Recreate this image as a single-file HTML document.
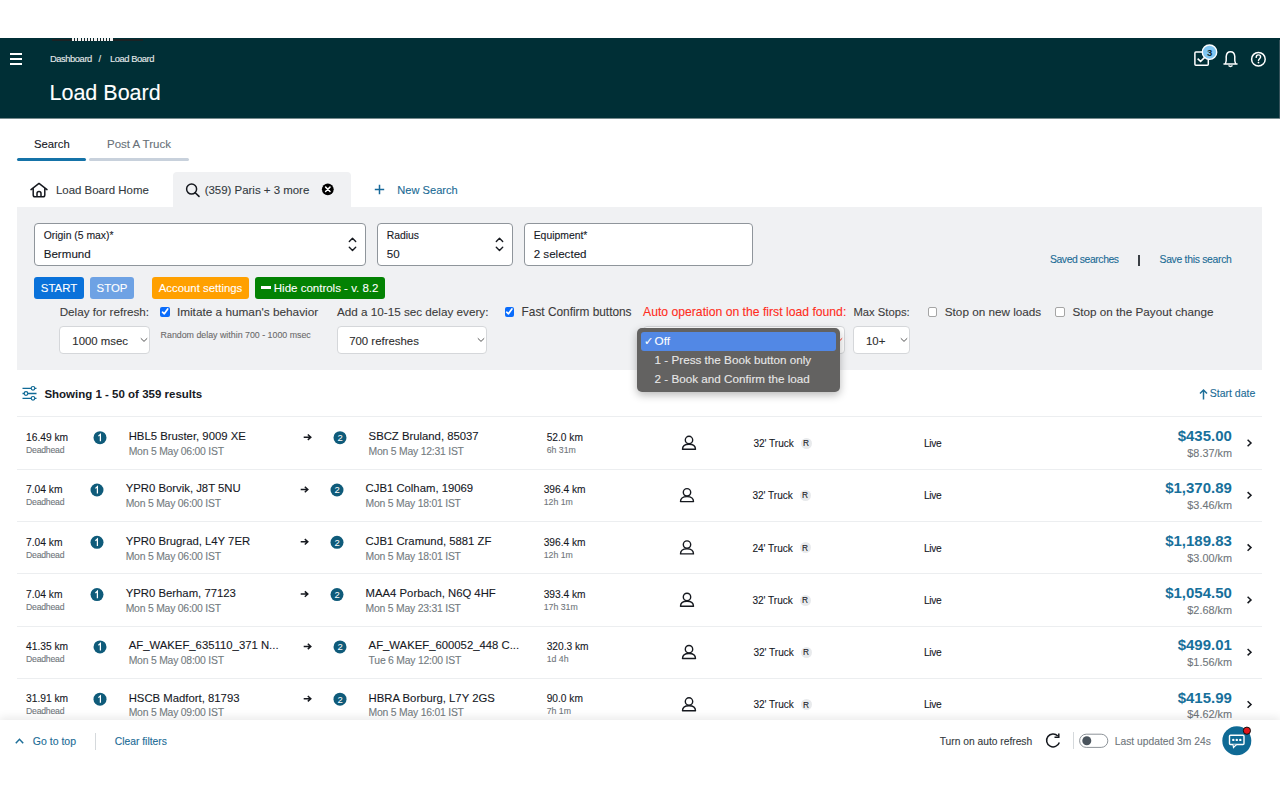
<!DOCTYPE html>
<html><head><meta charset="utf-8">
<style>
*{box-sizing:border-box;margin:0;padding:0}
html,body{width:1280px;height:800px;overflow:hidden;background:#fff;font-family:"Liberation Sans",sans-serif;color:#16191f}
.t{position:absolute;white-space:nowrap;line-height:1;-webkit-text-stroke:0.1px currentColor}
.b{position:absolute}
svg{position:absolute;overflow:visible}
</style></head><body>
<div class="b" style="left:0;top:38px;width:1280px;height:80px;background:#002f36"></div>
<div class="b" style="left:1279px;top:40px;width:1px;height:78px;background:#35525a"></div><div class="b" style="left:0;top:118px;width:1280px;height:1px;background:#768a8d"></div>
<div class="b" style="left:52px;top:39px;width:91px;height:1.5px;background:#1c2224"></div>
<div class="b" style="left:72px;top:38px;width:41px;height:2.5px;background:repeating-linear-gradient(90deg,#f2f2f2 0 2.2px,rgba(0,0,0,0) 2.2px 3.2px)"></div>
<div class="b" style="left:10px;top:53px;width:12px;height:2px;background:#fff"></div>
<div class="b" style="left:10px;top:58px;width:12px;height:2px;background:#fff"></div>
<div class="b" style="left:10px;top:63px;width:12px;height:2px;background:#fff"></div>
<div class="t" style="left:50.0px;top:54.0px;font-size:9.4px;color:#e6eaeb;letter-spacing:-0.45px;">Dashboard</div>
<div class="t" style="left:98.5px;top:54.0px;font-size:9.4px;color:#e6eaeb;">/</div>
<div class="t" style="left:110.0px;top:54.0px;font-size:9.4px;color:#e6eaeb;letter-spacing:-0.45px;">Load Board</div>
<div class="t" style="left:49.5px;top:83.0px;font-size:21.5px;color:#ffffff;">Load Board</div>
<svg style="left:0;top:0" width="1280" height="120">
 <rect x="1194.9" y="52.1" width="13.4" height="13.2" rx="1" fill="none" stroke="#fff" stroke-width="1.5"/>
 <path d="M1197.6 58.6 L1200.6 61.4 L1206.5 55.6" fill="none" stroke="#fff" stroke-width="1.5"/>
 <circle cx="1209.5" cy="52.2" r="7.2" fill="#80c6f1" stroke="#fff" stroke-width="1.4"/>
 <text x="1209.6" y="55.6" font-family="Liberation Sans" font-size="9.5" font-weight="bold" fill="#0d2a33" text-anchor="middle">3</text>
 <path d="M1224 64 L1237 64 M1225.4 63.6 C1227 61 1226 58 1226.2 56.5 C1226.5 53.3 1228.3 51.8 1230.5 51.8 C1232.7 51.8 1234.5 53.3 1234.8 56.5 C1235 58 1234 61 1235.6 63.6" fill="none" stroke="#fff" stroke-width="1.5" stroke-linejoin="round" stroke-linecap="round"/>
 <path d="M1228.5 65.5 Q1230.5 67.3 1232.5 65.5" fill="none" stroke="#fff" stroke-width="1.4"/>
 <circle cx="1258.4" cy="59.2" r="6.8" fill="none" stroke="#fff" stroke-width="1.5"/>
 <path d="M1256.2 57.4 C1256.2 55.6 1257.2 54.9 1258.4 54.9 C1259.7 54.9 1260.6 55.8 1260.6 57 C1260.6 58.6 1258.5 58.9 1258.5 60.6" fill="none" stroke="#fff" stroke-width="1.4" stroke-linecap="round"/>
 <circle cx="1258.5" cy="62.6" r="0.9" fill="#fff"/>
</svg>
<div class="t" style="left:34.0px;top:139.0px;font-size:11.3px;color:#16191f;">Search</div>
<div class="t" style="left:107.0px;top:139.0px;font-size:11.5px;color:#687078;">Post A Truck</div>
<div class="b" style="left:17px;top:158px;width:69px;height:3px;border-radius:2px;background:#1573a8"></div>
<div class="b" style="left:89px;top:158px;width:100px;height:3px;border-radius:2px;background:#c8d1dc"></div>
<div class="b" style="left:173px;top:172px;width:178px;height:40px;border-radius:4px 4px 0 0;background:#f0f1f3"></div>
<svg style="left:0;top:0" width="600" height="220">
 <path d="M31 189.6 L39 183.4 L47 189.6 M33.2 188 V195 Q33.2 196.8 35 196.8 H43 Q44.8 196.8 44.8 195 V188 M37 196.8 V193.5 Q37 191.6 39 191.6 Q41 191.6 41 193.5 V196.8" fill="none" stroke="#16191f" stroke-width="1.5" stroke-linejoin="round" stroke-linecap="round"/>
 <circle cx="191.6" cy="189.1" r="5" fill="none" stroke="#16191f" stroke-width="1.5"/>
 <path d="M195.2 192.7 L199 196.4" stroke="#16191f" stroke-width="1.6" stroke-linecap="round"/>
 <circle cx="327.8" cy="189.3" r="5.9" fill="#000"/>
 <path d="M325.6 187.1 L330 191.5 M330 187.1 L325.6 191.5" stroke="#fff" stroke-width="1.5" stroke-linecap="round"/>
 <path d="M374.8 189.5 L384.2 189.5 M379.5 184.8 L379.5 194.2" stroke="#17699a" stroke-width="1.5"/>
</svg>
<div class="t" style="left:56.0px;top:185.0px;font-size:11.45px;color:#333a40;">Load Board Home</div>
<div class="t" style="left:204.7px;top:185.0px;font-size:11.45px;color:#333a40;">(359) Paris + 3 more</div>
<div class="t" style="left:397.3px;top:185.0px;font-size:11.1px;color:#1a6b95;">New Search</div>
<div class="b" style="left:17px;top:207px;width:1245px;height:163px;background:#f0f1f3"></div>
<div class="b" style="left:34px;top:223px;width:332px;height:43px;background:#fff;border:1px solid #8f959b;border-radius:4px"></div>
<div class="t" style="left:43.7px;top:231.0px;font-size:10.4px;color:#16191f;">Origin (5 max)*</div>
<div class="t" style="left:43.7px;top:248.0px;font-size:11.6px;color:#16191f;">Bermund</div>
<svg style="left:0;top:0" width="1" height="1"><path d="M349.3 241.5 L352.5 238.3 L355.7 241.5 M349.3 247.3 L352.5 250.4 L355.7 247.3" fill="none" stroke="#16191f" stroke-width="1.4" stroke-linecap="round" stroke-linejoin="round"/></svg>
<div class="b" style="left:377px;top:223px;width:136px;height:43px;background:#fff;border:1px solid #8f959b;border-radius:4px"></div>
<div class="t" style="left:386.7px;top:231.0px;font-size:10.4px;color:#16191f;">Radius</div>
<div class="t" style="left:386.7px;top:248.0px;font-size:11.6px;color:#16191f;">50</div>
<svg style="left:0;top:0" width="1" height="1"><path d="M496.3 241.5 L499.5 238.3 L502.7 241.5 M496.3 247.3 L499.5 250.4 L502.7 247.3" fill="none" stroke="#16191f" stroke-width="1.4" stroke-linecap="round" stroke-linejoin="round"/></svg>
<div class="b" style="left:524px;top:223px;width:229px;height:43px;background:#fff;border:1px solid #8f959b;border-radius:4px"></div>
<div class="t" style="left:533.7px;top:231.0px;font-size:10.4px;color:#16191f;">Equipment*</div>
<div class="t" style="left:533.7px;top:248.0px;font-size:11.6px;color:#16191f;">2 selected</div>
<div class="t" style="left:1050.0px;top:255.0px;font-size:10.4px;color:#1a6b95;letter-spacing:-0.42px;">Saved searches</div>
<div class="b" style="left:1138.4px;top:254.5px;width:1.5px;height:11px;background:#3a3f44"></div>
<div class="t" style="left:1159.5px;top:255.0px;font-size:10.4px;color:#1a6b95;letter-spacing:-0.3px;">Save this search</div>
<div class="b" style="left:34px;top:277px;width:50px;height:22px;border-radius:3px;background:#0a72da"></div>
<div class="t" style="left:34px;width:50px;text-align:center;top:283px;font-size:11.4px;color:#fff">START</div>
<div class="b" style="left:90px;top:277px;width:44px;height:22px;border-radius:3px;background:#6ea2e4"></div>
<div class="t" style="left:90px;width:44px;text-align:center;top:283px;font-size:11.4px;color:#fff">STOP</div>
<div class="b" style="left:152px;top:277px;width:97px;height:22px;border-radius:3px;background:#ffa000"></div>
<div class="t" style="left:152px;width:97px;text-align:center;top:283px;font-size:11.4px;color:#fff">Account settings</div>
<div class="b" style="left:255px;top:277px;width:130px;height:22px;border-radius:3px;background:#038203"></div>
<div class="b" style="left:261px;top:286px;width:9.5px;height:3px;background:#fff"></div>
<div class="t" style="left:273.8px;top:283.0px;font-size:11.5px;color:#fff;">Hide controls - v. 8.2</div>
<div class="t" style="left:59.7px;top:306.0px;font-size:11.66px;color:#3c3c3c;">Delay for refresh:</div>
<div class="t" style="left:176.9px;top:307.0px;font-size:11.81px;color:#3c3c3c;">Imitate a human's behavior</div>
<div class="t" style="left:337.0px;top:306.0px;font-size:11.7px;color:#3c3c3c;">Add a 10-15 sec delay every:</div>
<div class="t" style="left:521.6px;top:307.0px;font-size:11.85px;color:#3c3c3c;">Fast Confirm buttons</div>
<div class="t" style="left:643.0px;top:306.0px;font-size:12.2px;color:#ff2d21;">Auto operation on the first load found:</div>
<div class="t" style="left:853.4px;top:307.0px;font-size:11.26px;color:#3c3c3c;">Max Stops:</div>
<div class="t" style="left:944.8px;top:306.0px;font-size:11.73px;color:#3c3c3c;">Stop on new loads</div>
<div class="t" style="left:1072.5px;top:306.0px;font-size:11.69px;color:#3c3c3c;">Stop on the Payout change</div>
<div class="b" style="left:160.3px;top:307px;width:9.6px;height:9.5px;border-radius:2px;background:#0a6cfb"></div>
<svg style="left:0;top:0" width="1" height="1"><path d="M162.5 312.2 L164.3 313.8 L167.70000000000002 309" fill="none" stroke="#fff" stroke-width="1.7" stroke-linecap="round" stroke-linejoin="round"/></svg>
<div class="b" style="left:504.5px;top:307px;width:9.6px;height:9.5px;border-radius:2px;background:#0a6cfb"></div>
<svg style="left:0;top:0" width="1" height="1"><path d="M506.7 312.2 L508.5 313.8 L511.9 309" fill="none" stroke="#fff" stroke-width="1.7" stroke-linecap="round" stroke-linejoin="round"/></svg>
<div class="b" style="left:927.7px;top:307px;width:9.7px;height:9.7px;border-radius:2px;background:#fff;border:1px solid #a5a5a5"></div>
<div class="b" style="left:1055.3px;top:307px;width:9.7px;height:9.7px;border-radius:2px;background:#fff;border:1px solid #a5a5a5"></div>
<div class="b" style="left:59px;top:326px;width:91px;height:27.5px;background:#fff;border:1px solid #d5d7da;border-radius:4px"></div>
<div class="t" style="left:72.3px;top:336.0px;font-size:11.4px;color:#2e2e2e;">1000 msec</div>
<svg style="left:0;top:0" width="1" height="1"><path d="M140.8 338.3 L144 341.4 L147.2 338.3" fill="none" stroke="#555" stroke-width="1"/></svg>
<div class="b" style="left:337px;top:326px;width:150px;height:27.5px;background:#fff;border:1px solid #d5d7da;border-radius:4px"></div>
<div class="t" style="left:349.2px;top:336.0px;font-size:11.4px;color:#2e2e2e;">700 refreshes</div>
<svg style="left:0;top:0" width="1" height="1"><path d="M477.8 338.3 L481 341.4 L484.2 338.3" fill="none" stroke="#555" stroke-width="1"/></svg>
<div class="b" style="left:643px;top:326px;width:202px;height:27.5px;background:#fff;border:1px solid #d5d7da;border-radius:4px"></div>
<svg style="left:0;top:0" width="1" height="1"><path d="M835.8 338.3 L839 341.4 L842.2 338.3" fill="none" stroke="#ff2d21" stroke-width="1"/></svg>
<div class="b" style="left:853px;top:326px;width:57px;height:27.5px;background:#fff;border:1px solid #d5d7da;border-radius:4px"></div>
<div class="t" style="left:866.0px;top:336.0px;font-size:11.4px;color:#2e2e2e;">10+</div>
<svg style="left:0;top:0" width="1" height="1"><path d="M900.8 338.3 L904 341.4 L907.2 338.3" fill="none" stroke="#555" stroke-width="1"/></svg>
<div class="t" style="left:160.6px;top:331.0px;font-size:8.84px;color:#6b6b6b;">Random delay within 700 - 1000 msec</div>
<div class="b" style="left:637px;top:328px;width:203px;height:64px;border-radius:5px;background:#636261;box-shadow:0 3px 9px rgba(0,0,0,0.28)"></div>
<div class="b" style="left:641px;top:332px;width:195px;height:19px;border-radius:3px;background:#5288e5"></div>
<div class="t" style="left:644.3px;top:336.0px;font-size:10.5px;color:#fff;">&#10003;</div>
<div class="t" style="left:654.6px;top:335.0px;font-size:11.7px;color:#fff;">Off</div>
<div class="t" style="left:654.6px;top:354.0px;font-size:11.7px;color:#e8e8e8;">1 - Press the Book button only</div>
<div class="t" style="left:654.6px;top:373.0px;font-size:11.7px;color:#e8e8e8;">2 - Book and Confirm the load</div>
<svg style="left:0;top:0" width="1" height="1">
 <path d="M22.5 388.3 H36.5 M22.5 393.5 H36.5 M22.5 398.3 H36.5" stroke="#106a96" stroke-width="1.3"/>
 <circle cx="33" cy="388.3" r="1.8" fill="#fff" stroke="#106a96" stroke-width="1.2"/>
 <circle cx="26" cy="393.5" r="1.8" fill="#fff" stroke="#106a96" stroke-width="1.2"/>
 <circle cx="33" cy="398.3" r="1.8" fill="#fff" stroke="#106a96" stroke-width="1.2"/>
 <path d="M1203.5 399.5 V390 M1200 393.5 L1203.5 390 L1207 393.5" fill="none" stroke="#1f6f99" stroke-width="1.5"/>
</svg>
<div class="t" style="left:44.4px;top:389.0px;font-size:11.5px;color:#16191f;font-weight:bold;-webkit-text-stroke:0;">Showing 1 - 50 of 359 results</div>
<div class="t" style="left:1209.7px;top:388.0px;font-size:10.54px;color:#1a6b95;">Start date</div>
<div class="b" style="left:17px;top:416px;width:1245px;height:1px;background:#eceef0"></div>
<div class="b" style="left:17px;top:468.6px;width:1245px;height:1px;background:#eceef0"></div>
<div class="t" style="left:26.0px;top:433.0px;font-size:10.26px;color:#16191f;">16.49 km</div>
<div class="t" style="left:26.0px;top:446.0px;font-size:8.7px;color:#6f767b;letter-spacing:-0.23px;">Deadhead</div>
<svg style="left:0;top:0" width="1" height="1"><circle cx="100" cy="437.7" r="6.5" fill="#0f5b7a"/><path d="M98.4 436.1 L100.4 434.3 V441.3" fill="none" stroke="#fff" stroke-width="1.25"/></svg>
<svg style="left:0;top:0" width="1" height="1"><circle cx="340" cy="437.7" r="6.5" fill="#0f5b7a"/><text x="340.1" y="441.1" font-family="Liberation Sans" font-size="9.5" fill="#fff" text-anchor="middle">2</text></svg>
<div class="t" style="left:128.7px;top:431.0px;font-size:11.34px;color:#16191f;">HBL5 Bruster, 9009 XE</div>
<div class="t" style="left:128.7px;top:447.0px;font-size:10.4px;color:#737b80;letter-spacing:-0.22px;">Mon 5 May 06:00 IST</div>
<svg style="left:0;top:0" width="1" height="1"><path d="M303.7 437.2 H310.5 M307.8 434.5 L310.8 437.2 L307.8 439.9" fill="none" stroke="#16191f" stroke-width="1.5"/></svg>
<div class="t" style="left:368.6px;top:431.0px;font-size:11.32px;color:#16191f;">SBCZ Bruland, 85037</div>
<div class="t" style="left:368.6px;top:447.0px;font-size:10.4px;color:#737b80;letter-spacing:-0.22px;">Mon 5 May 12:31 IST</div>
<div class="t" style="left:546.7px;top:433.0px;font-size:10.2px;color:#16191f;">52.0 km</div>
<div class="t" style="left:546.7px;top:446.0px;font-size:8.78px;color:#6f767b;">6h 31m</div>
<svg style="left:0;top:0" width="1" height="1"><circle cx="689" cy="440.0" r="3.7" fill="none" stroke="#16191f" stroke-width="1.4"/><path d="M682.5 449.3 C682.5 445.0 685.5 444.3 689 444.3 C692.5 444.3 695.5 445.0 695.5 449.3 Z" fill="none" stroke="#16191f" stroke-width="1.4" stroke-linejoin="round"/></svg>
<div class="t" style="left:753.4px;top:439.0px;font-size:10.04px;color:#16191f;">32' Truck</div>
<div class="b" style="left:800.6px;top:437.6px;width:11px;height:11px;border-radius:50%;background:#e8eaec"></div>
<div class="t" style="left:800.6px;width:11px;text-align:center;top:439.0px;font-size:8.3px;color:#16191f">R</div>
<div class="t" style="left:924.0px;top:439.0px;font-size:10.2px;color:#16191f;letter-spacing:-0.3px;">Live</div>
<div class="t" style="right:48.2px;top:428.0px;font-size:14.99px;color:#17709b;font-weight:bold;-webkit-text-stroke:0;">$435.00</div>
<div class="t" style="right:48.0px;top:448.0px;font-size:10.87px;color:#6f767b;">$8.37/km</div>
<svg style="left:0;top:0" width="1" height="1"><path d="M1247.6 439.8 L1251 443.0 L1247.6 446.2" fill="none" stroke="#16191f" stroke-width="1.5"/></svg>
<div class="b" style="left:17px;top:520.9px;width:1245px;height:1px;background:#eceef0"></div>
<div class="t" style="left:26.0px;top:485.0px;font-size:10.26px;color:#16191f;">7.04 km</div>
<div class="t" style="left:26.0px;top:498.0px;font-size:8.7px;color:#6f767b;letter-spacing:-0.23px;">Deadhead</div>
<svg style="left:0;top:0" width="1" height="1"><circle cx="97" cy="490.0" r="6.5" fill="#0f5b7a"/><path d="M95.4 488.4 L97.4 486.6 V493.6" fill="none" stroke="#fff" stroke-width="1.25"/></svg>
<svg style="left:0;top:0" width="1" height="1"><circle cx="337" cy="490.0" r="6.5" fill="#0f5b7a"/><text x="337.1" y="493.4" font-family="Liberation Sans" font-size="9.5" fill="#fff" text-anchor="middle">2</text></svg>
<div class="t" style="left:125.7px;top:483.0px;font-size:11.34px;color:#16191f;">YPR0 Borvik, J8T 5NU</div>
<div class="t" style="left:125.7px;top:499.0px;font-size:10.4px;color:#737b80;letter-spacing:-0.22px;">Mon 5 May 06:00 IST</div>
<svg style="left:0;top:0" width="1" height="1"><path d="M300.7 489.5 H307.5 M304.8 486.8 L307.8 489.5 L304.8 492.2" fill="none" stroke="#16191f" stroke-width="1.5"/></svg>
<div class="t" style="left:365.6px;top:483.0px;font-size:11.32px;color:#16191f;">CJB1 Colham, 19069</div>
<div class="t" style="left:365.6px;top:499.0px;font-size:10.4px;color:#737b80;letter-spacing:-0.22px;">Mon 5 May 18:01 IST</div>
<div class="t" style="left:543.7px;top:485.0px;font-size:10.2px;color:#16191f;">396.4 km</div>
<div class="t" style="left:543.7px;top:498.0px;font-size:8.78px;color:#6f767b;">12h 1m</div>
<svg style="left:0;top:0" width="1" height="1"><circle cx="687" cy="492.3" r="3.7" fill="none" stroke="#16191f" stroke-width="1.4"/><path d="M680.5 501.6 C680.5 497.3 683.5 496.6 687 496.6 C690.5 496.6 693.5 497.3 693.5 501.6 Z" fill="none" stroke="#16191f" stroke-width="1.4" stroke-linejoin="round"/></svg>
<div class="t" style="left:752.4px;top:491.0px;font-size:10.04px;color:#16191f;">32' Truck</div>
<div class="b" style="left:799.6px;top:489.9px;width:11px;height:11px;border-radius:50%;background:#e8eaec"></div>
<div class="t" style="left:799.6px;width:11px;text-align:center;top:491.3px;font-size:8.3px;color:#16191f">R</div>
<div class="t" style="left:924.0px;top:491.0px;font-size:10.2px;color:#16191f;letter-spacing:-0.3px;">Live</div>
<div class="t" style="right:48.2px;top:480.0px;font-size:14.99px;color:#17709b;font-weight:bold;-webkit-text-stroke:0;">$1,370.89</div>
<div class="t" style="right:48.0px;top:500.0px;font-size:10.87px;color:#6f767b;">$3.46/km</div>
<svg style="left:0;top:0" width="1" height="1"><path d="M1247.6 492.1 L1251 495.3 L1247.6 498.5" fill="none" stroke="#16191f" stroke-width="1.5"/></svg>
<div class="b" style="left:17px;top:573.2px;width:1245px;height:1px;background:#eceef0"></div>
<div class="t" style="left:26.0px;top:538.0px;font-size:10.26px;color:#16191f;">7.04 km</div>
<div class="t" style="left:26.0px;top:551.0px;font-size:8.7px;color:#6f767b;letter-spacing:-0.23px;">Deadhead</div>
<svg style="left:0;top:0" width="1" height="1"><circle cx="97" cy="542.3" r="6.5" fill="#0f5b7a"/><path d="M95.4 540.7 L97.4 538.9 V545.9" fill="none" stroke="#fff" stroke-width="1.25"/></svg>
<svg style="left:0;top:0" width="1" height="1"><circle cx="337" cy="542.3" r="6.5" fill="#0f5b7a"/><text x="337.1" y="545.7" font-family="Liberation Sans" font-size="9.5" fill="#fff" text-anchor="middle">2</text></svg>
<div class="t" style="left:125.7px;top:536.0px;font-size:11.34px;color:#16191f;">YPR0 Brugrad, L4Y 7ER</div>
<div class="t" style="left:125.7px;top:552.0px;font-size:10.4px;color:#737b80;letter-spacing:-0.22px;">Mon 5 May 06:00 IST</div>
<svg style="left:0;top:0" width="1" height="1"><path d="M300.7 541.8 H307.5 M304.8 539.1 L307.8 541.8 L304.8 544.5" fill="none" stroke="#16191f" stroke-width="1.5"/></svg>
<div class="t" style="left:365.6px;top:536.0px;font-size:11.32px;color:#16191f;">CJB1 Cramund, 5881 ZF</div>
<div class="t" style="left:365.6px;top:552.0px;font-size:10.4px;color:#737b80;letter-spacing:-0.22px;">Mon 5 May 18:01 IST</div>
<div class="t" style="left:543.7px;top:538.0px;font-size:10.2px;color:#16191f;">396.4 km</div>
<div class="t" style="left:543.7px;top:551.0px;font-size:8.78px;color:#6f767b;">12h 1m</div>
<svg style="left:0;top:0" width="1" height="1"><circle cx="687" cy="544.6" r="3.7" fill="none" stroke="#16191f" stroke-width="1.4"/><path d="M680.5 553.9 C680.5 549.6 683.5 548.9 687 548.9 C690.5 548.9 693.5 549.6 693.5 553.9 Z" fill="none" stroke="#16191f" stroke-width="1.4" stroke-linejoin="round"/></svg>
<div class="t" style="left:752.4px;top:544.0px;font-size:10.04px;color:#16191f;">24' Truck</div>
<div class="b" style="left:799.6px;top:542.2px;width:11px;height:11px;border-radius:50%;background:#e8eaec"></div>
<div class="t" style="left:799.6px;width:11px;text-align:center;top:543.6px;font-size:8.3px;color:#16191f">R</div>
<div class="t" style="left:924.0px;top:544.0px;font-size:10.2px;color:#16191f;letter-spacing:-0.3px;">Live</div>
<div class="t" style="right:48.2px;top:533.0px;font-size:14.99px;color:#17709b;font-weight:bold;-webkit-text-stroke:0;">$1,189.83</div>
<div class="t" style="right:48.0px;top:553.0px;font-size:10.87px;color:#6f767b;">$3.00/km</div>
<svg style="left:0;top:0" width="1" height="1"><path d="M1247.6 544.4 L1251 547.6 L1247.6 550.8" fill="none" stroke="#16191f" stroke-width="1.5"/></svg>
<div class="b" style="left:17px;top:625.5px;width:1245px;height:1px;background:#eceef0"></div>
<div class="t" style="left:26.0px;top:590.0px;font-size:10.26px;color:#16191f;">7.04 km</div>
<div class="t" style="left:26.0px;top:603.0px;font-size:8.7px;color:#6f767b;letter-spacing:-0.23px;">Deadhead</div>
<svg style="left:0;top:0" width="1" height="1"><circle cx="97" cy="594.6" r="6.5" fill="#0f5b7a"/><path d="M95.4 593.0 L97.4 591.2 V598.2" fill="none" stroke="#fff" stroke-width="1.25"/></svg>
<svg style="left:0;top:0" width="1" height="1"><circle cx="337" cy="594.6" r="6.5" fill="#0f5b7a"/><text x="337.1" y="598.0" font-family="Liberation Sans" font-size="9.5" fill="#fff" text-anchor="middle">2</text></svg>
<div class="t" style="left:125.7px;top:588.0px;font-size:11.34px;color:#16191f;">YPR0 Berham, 77123</div>
<div class="t" style="left:125.7px;top:604.0px;font-size:10.4px;color:#737b80;letter-spacing:-0.22px;">Mon 5 May 06:00 IST</div>
<svg style="left:0;top:0" width="1" height="1"><path d="M300.7 594.1 H307.5 M304.8 591.4 L307.8 594.1 L304.8 596.8" fill="none" stroke="#16191f" stroke-width="1.5"/></svg>
<div class="t" style="left:365.6px;top:588.0px;font-size:11.32px;color:#16191f;">MAA4 Porbach, N6Q 4HF</div>
<div class="t" style="left:365.6px;top:604.0px;font-size:10.4px;color:#737b80;letter-spacing:-0.22px;">Mon 5 May 23:31 IST</div>
<div class="t" style="left:543.7px;top:590.0px;font-size:10.2px;color:#16191f;">393.4 km</div>
<div class="t" style="left:543.7px;top:603.0px;font-size:8.78px;color:#6f767b;">17h 31m</div>
<svg style="left:0;top:0" width="1" height="1"><circle cx="687" cy="596.9" r="3.7" fill="none" stroke="#16191f" stroke-width="1.4"/><path d="M680.5 606.2 C680.5 601.9 683.5 601.2 687 601.2 C690.5 601.2 693.5 601.9 693.5 606.2 Z" fill="none" stroke="#16191f" stroke-width="1.4" stroke-linejoin="round"/></svg>
<div class="t" style="left:752.4px;top:596.0px;font-size:10.04px;color:#16191f;">32' Truck</div>
<div class="b" style="left:799.6px;top:594.5px;width:11px;height:11px;border-radius:50%;background:#e8eaec"></div>
<div class="t" style="left:799.6px;width:11px;text-align:center;top:595.9px;font-size:8.3px;color:#16191f">R</div>
<div class="t" style="left:924.0px;top:596.0px;font-size:10.2px;color:#16191f;letter-spacing:-0.3px;">Live</div>
<div class="t" style="right:48.2px;top:585.0px;font-size:14.99px;color:#17709b;font-weight:bold;-webkit-text-stroke:0;">$1,054.50</div>
<div class="t" style="right:48.0px;top:605.0px;font-size:10.87px;color:#6f767b;">$2.68/km</div>
<svg style="left:0;top:0" width="1" height="1"><path d="M1247.6 596.7 L1251 599.9 L1247.6 603.1" fill="none" stroke="#16191f" stroke-width="1.5"/></svg>
<div class="b" style="left:17px;top:677.8px;width:1245px;height:1px;background:#eceef0"></div>
<div class="t" style="left:26.0px;top:642.0px;font-size:10.26px;color:#16191f;">41.35 km</div>
<div class="t" style="left:26.0px;top:655.0px;font-size:8.7px;color:#6f767b;letter-spacing:-0.23px;">Deadhead</div>
<svg style="left:0;top:0" width="1" height="1"><circle cx="100" cy="646.9" r="6.5" fill="#0f5b7a"/><path d="M98.4 645.3 L100.4 643.5 V650.5" fill="none" stroke="#fff" stroke-width="1.25"/></svg>
<svg style="left:0;top:0" width="1" height="1"><circle cx="340" cy="646.9" r="6.5" fill="#0f5b7a"/><text x="340.1" y="650.3" font-family="Liberation Sans" font-size="9.5" fill="#fff" text-anchor="middle">2</text></svg>
<div class="t" style="left:128.7px;top:640.0px;font-size:11.34px;color:#16191f;">AF_WAKEF_635110_371 N...</div>
<div class="t" style="left:128.7px;top:656.0px;font-size:10.4px;color:#737b80;letter-spacing:-0.22px;">Mon 5 May 08:00 IST</div>
<svg style="left:0;top:0" width="1" height="1"><path d="M303.7 646.4 H310.5 M307.8 643.7 L310.8 646.4 L307.8 649.1" fill="none" stroke="#16191f" stroke-width="1.5"/></svg>
<div class="t" style="left:368.6px;top:640.0px;font-size:11.32px;color:#16191f;">AF_WAKEF_600052_448 C...</div>
<div class="t" style="left:368.6px;top:656.0px;font-size:10.4px;color:#737b80;letter-spacing:-0.22px;">Tue 6 May 12:00 IST</div>
<div class="t" style="left:546.7px;top:642.0px;font-size:10.2px;color:#16191f;">320.3 km</div>
<div class="t" style="left:546.7px;top:655.0px;font-size:8.78px;color:#6f767b;">1d 4h</div>
<svg style="left:0;top:0" width="1" height="1"><circle cx="689" cy="649.2" r="3.7" fill="none" stroke="#16191f" stroke-width="1.4"/><path d="M682.5 658.5 C682.5 654.2 685.5 653.5 689 653.5 C692.5 653.5 695.5 654.2 695.5 658.5 Z" fill="none" stroke="#16191f" stroke-width="1.4" stroke-linejoin="round"/></svg>
<div class="t" style="left:753.4px;top:648.0px;font-size:10.04px;color:#16191f;">32' Truck</div>
<div class="b" style="left:800.6px;top:646.8px;width:11px;height:11px;border-radius:50%;background:#e8eaec"></div>
<div class="t" style="left:800.6px;width:11px;text-align:center;top:648.2px;font-size:8.3px;color:#16191f">R</div>
<div class="t" style="left:924.0px;top:648.0px;font-size:10.2px;color:#16191f;letter-spacing:-0.3px;">Live</div>
<div class="t" style="right:48.2px;top:637.0px;font-size:14.99px;color:#17709b;font-weight:bold;-webkit-text-stroke:0;">$499.01</div>
<div class="t" style="right:48.0px;top:657.0px;font-size:10.87px;color:#6f767b;">$1.56/km</div>
<svg style="left:0;top:0" width="1" height="1"><path d="M1247.6 649.0 L1251 652.2 L1247.6 655.4" fill="none" stroke="#16191f" stroke-width="1.5"/></svg>
<div class="b" style="left:17px;top:730.1px;width:1245px;height:1px;background:#eceef0"></div>
<div class="t" style="left:26.0px;top:694.0px;font-size:10.26px;color:#16191f;">31.91 km</div>
<div class="t" style="left:26.0px;top:707.0px;font-size:8.7px;color:#6f767b;letter-spacing:-0.23px;">Deadhead</div>
<svg style="left:0;top:0" width="1" height="1"><circle cx="100" cy="699.2" r="6.5" fill="#0f5b7a"/><path d="M98.4 697.6 L100.4 695.8 V702.8" fill="none" stroke="#fff" stroke-width="1.25"/></svg>
<svg style="left:0;top:0" width="1" height="1"><circle cx="340" cy="699.2" r="6.5" fill="#0f5b7a"/><text x="340.1" y="702.6" font-family="Liberation Sans" font-size="9.5" fill="#fff" text-anchor="middle">2</text></svg>
<div class="t" style="left:128.7px;top:693.0px;font-size:11.34px;color:#16191f;">HSCB Madfort, 81793</div>
<div class="t" style="left:128.7px;top:708.0px;font-size:10.4px;color:#737b80;letter-spacing:-0.22px;">Mon 5 May 09:00 IST</div>
<svg style="left:0;top:0" width="1" height="1"><path d="M303.7 698.7 H310.5 M307.8 696.0 L310.8 698.7 L307.8 701.4" fill="none" stroke="#16191f" stroke-width="1.5"/></svg>
<div class="t" style="left:368.6px;top:693.0px;font-size:11.32px;color:#16191f;">HBRA Borburg, L7Y 2GS</div>
<div class="t" style="left:368.6px;top:708.0px;font-size:10.4px;color:#737b80;letter-spacing:-0.22px;">Mon 5 May 16:01 IST</div>
<div class="t" style="left:546.7px;top:694.0px;font-size:10.2px;color:#16191f;">90.0 km</div>
<div class="t" style="left:546.7px;top:707.0px;font-size:8.78px;color:#6f767b;">7h 1m</div>
<svg style="left:0;top:0" width="1" height="1"><circle cx="689" cy="701.5" r="3.7" fill="none" stroke="#16191f" stroke-width="1.4"/><path d="M682.5 710.8 C682.5 706.5 685.5 705.8 689 705.8 C692.5 705.8 695.5 706.5 695.5 710.8 Z" fill="none" stroke="#16191f" stroke-width="1.4" stroke-linejoin="round"/></svg>
<div class="t" style="left:753.4px;top:700.0px;font-size:10.04px;color:#16191f;">32' Truck</div>
<div class="b" style="left:800.6px;top:699.1px;width:11px;height:11px;border-radius:50%;background:#e8eaec"></div>
<div class="t" style="left:800.6px;width:11px;text-align:center;top:700.5px;font-size:8.3px;color:#16191f">R</div>
<div class="t" style="left:924.0px;top:700.0px;font-size:10.2px;color:#16191f;letter-spacing:-0.3px;">Live</div>
<div class="t" style="right:48.2px;top:690.0px;font-size:14.99px;color:#17709b;font-weight:bold;-webkit-text-stroke:0;">$415.99</div>
<div class="t" style="right:48.0px;top:709.0px;font-size:10.87px;color:#6f767b;">$4.62/km</div>
<svg style="left:0;top:0" width="1" height="1"><path d="M1247.6 701.3 L1251 704.5 L1247.6 707.7" fill="none" stroke="#16191f" stroke-width="1.5"/></svg>
<div class="b" style="left:0;top:720px;width:1280px;height:39px;background:#fff;box-shadow:0 -3px 8px rgba(0,0,0,0.08)"></div>
<div class="b" style="left:0;top:759px;width:1280px;height:41px;background:#fff"></div>
<svg style="left:0;top:0" width="1" height="1">
 <path d="M15.8 743.3 L19.5 739.3 L23.2 743.3" fill="none" stroke="#1f6f99" stroke-width="1.5"/>
 <path d="M1057.8 735.9 A6.5 6.5 0 1 0 1059.3 742.4" fill="none" stroke="#16191f" stroke-width="1.5"/>
 <path d="M1058.8 733.4 L1058.8 737.3 L1054.5 737.3" fill="none" stroke="#16191f" stroke-width="1.5"/>
 <rect x="1079.6" y="734.2" width="28.2" height="13.2" rx="6.6" fill="#fff" stroke="#8d9399" stroke-width="1"/>
 <circle cx="1086.8" cy="740.8" r="4.5" fill="#4a545d"/>
 <circle cx="1236.8" cy="740.8" r="14.5" fill="#0f6a95"/>
 <rect x="1229.5" y="735.3" width="14.5" height="9.2" rx="1" fill="none" stroke="#fff" stroke-width="1.4"/>
 <path d="M1233 744.5 L1233.5 747.5 L1236.5 744.5" fill="#0f6a95" stroke="#fff" stroke-width="1.2"/>
 <circle cx="1233.3" cy="739.9" r="1.2" fill="#fff"/><circle cx="1236.8" cy="739.9" r="1.2" fill="#fff"/><circle cx="1240.3" cy="739.9" r="1.2" fill="#fff"/>
 <circle cx="1246.9" cy="730.7" r="3.6" fill="#e0161b" stroke="#111" stroke-width="1"/>
</svg>
<div class="b" style="left:95px;top:732.5px;width:1px;height:17px;background:#d5d9dc"></div>
<div class="b" style="left:1073px;top:732.2px;width:1px;height:17px;background:#d5d9dc"></div>
<div class="t" style="left:32.8px;top:736.0px;font-size:10.53px;color:#1a6b95;">Go to top</div>
<div class="t" style="left:114.8px;top:737.0px;font-size:10.3px;color:#1a6b95;">Clear filters</div>
<div class="t" style="left:939.7px;top:737.0px;font-size:10.26px;color:#333a40;">Turn on auto refresh</div>
<div class="t" style="left:1114.7px;top:737.0px;font-size:10.31px;color:#6f767b;">Last updated 3m 24s</div>
</body></html>
